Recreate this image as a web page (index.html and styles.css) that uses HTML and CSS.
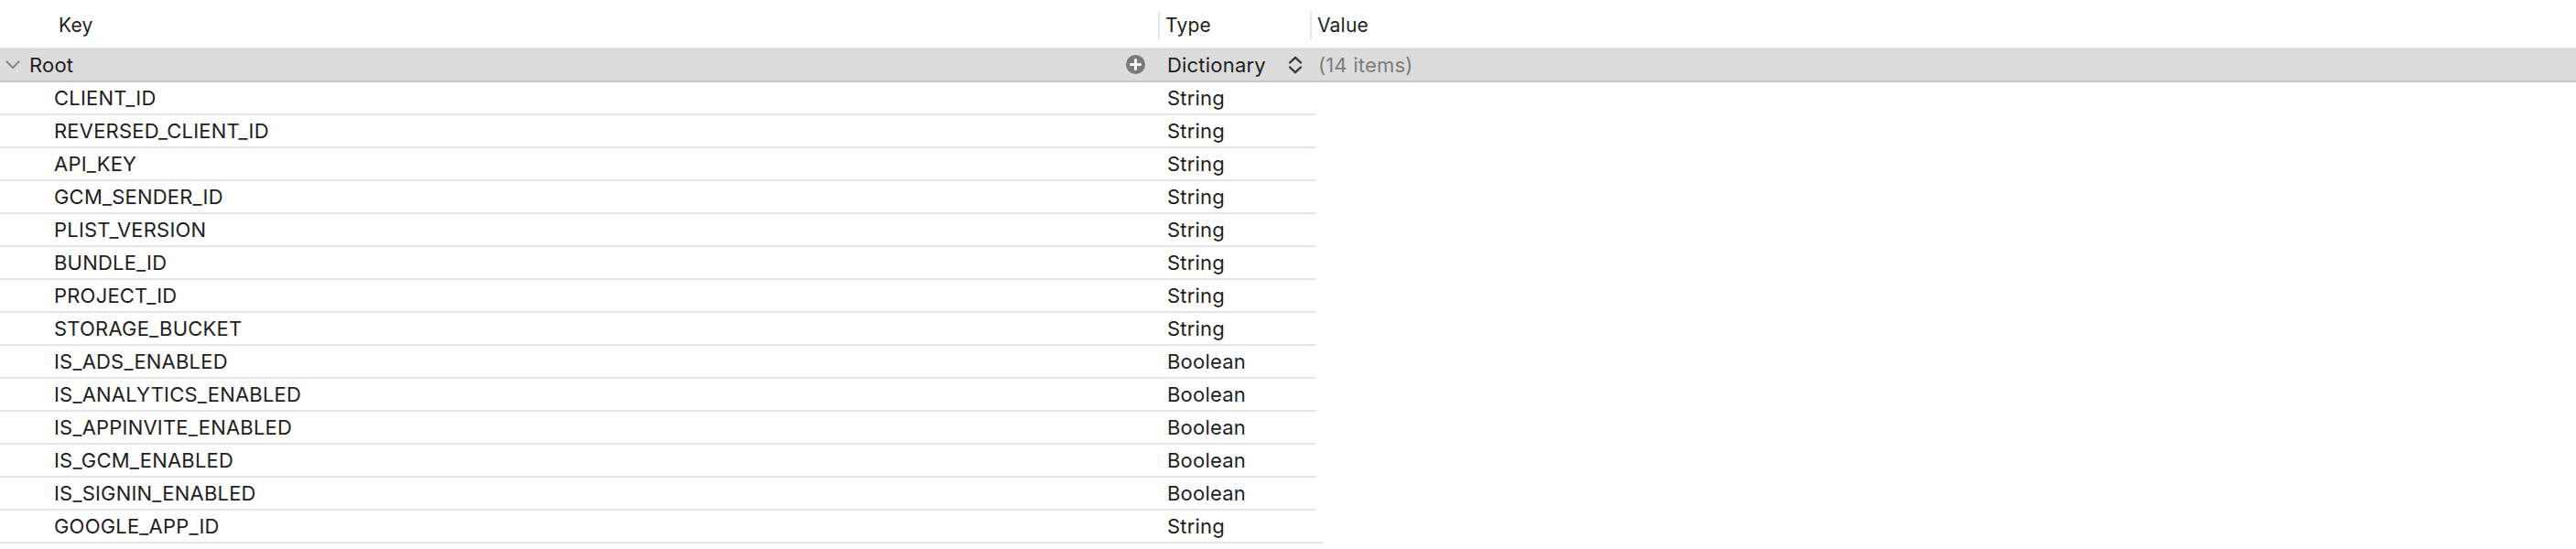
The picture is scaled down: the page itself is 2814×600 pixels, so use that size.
FILE: index.html
```html
<!DOCTYPE html>
<html>
<head>
<meta charset="utf-8">
<link rel="stylesheet" href="styles.css">
</head>
<body>
<div class="editor">
  <div class="header">
    <div class="hcell hkey">Key</div>
    <div class="hcell htype">Type</div>
    <div class="hcell hvalue">Value</div>
  </div>
  <div class="root">
    <div class="rkey">
      <svg class="disclosure" width="16" height="10" viewBox="0 0 16 10"><path d="M1.5 1.5 L8 8 L14.5 1.5" fill="none" stroke="#8a8a8a" stroke-width="2.2" stroke-linecap="round" stroke-linejoin="round"/></svg>
      <span class="rname">Root</span>
      <svg class="addbtn" width="21" height="21" viewBox="0 0 21 21"><circle cx="10.5" cy="10.5" r="10.5" fill="#7b7b7b"/><path d="M10.5 5.5 V15.5 M5.5 10.5 H15.5" stroke="#fff" stroke-width="3" stroke-linecap="round"/></svg>
    </div>
    <div class="rtype">
      <span>Dictionary</span>
      <svg class="stepper" width="16" height="20" viewBox="0 0 16 20"><path d="M2 7.5 L8 1.8 L14 7.5 M2 12.5 L8 18.2 L14 12.5" fill="none" stroke="#3a3a3a" stroke-width="2.4" stroke-linecap="round" stroke-linejoin="round"/></svg>
    </div>
    <div class="rvalue">(14 items)</div>
  </div>
  <div class="rows">
    <div class="row"><div class="key">CLIENT_ID</div><div class="type">String</div></div>
    <div class="row"><div class="key">REVERSED_CLIENT_ID</div><div class="type">String</div></div>
    <div class="row"><div class="key">API_KEY</div><div class="type">String</div></div>
    <div class="row"><div class="key">GCM_SENDER_ID</div><div class="type">String</div></div>
    <div class="row"><div class="key">PLIST_VERSION</div><div class="type">String</div></div>
    <div class="row"><div class="key">BUNDLE_ID</div><div class="type">String</div></div>
    <div class="row"><div class="key">PROJECT_ID</div><div class="type">String</div></div>
    <div class="row"><div class="key">STORAGE_BUCKET</div><div class="type">String</div></div>
    <div class="row"><div class="key">IS_ADS_ENABLED</div><div class="type">Boolean</div></div>
    <div class="row"><div class="key">IS_ANALYTICS_ENABLED</div><div class="type">Boolean</div></div>
    <div class="row"><div class="key">IS_APPINVITE_ENABLED</div><div class="type">Boolean</div></div>
    <div class="row"><div class="key">IS_GCM_ENABLED</div><div class="type">Boolean</div></div>
    <div class="row"><div class="key">IS_SIGNIN_ENABLED</div><div class="type">Boolean</div></div>
    <div class="row last"><div class="key">GOOGLE_APP_ID</div><div class="type">String</div></div>
  </div>
</div>
</body>
</html>
```
FILE: styles.css
```css
html, body {
  margin: 0;
  padding: 0;
  background: #ffffff;
}
body {
  font-family: Inter, "Liberation Sans", sans-serif;
  font-size: 22px;
  letter-spacing: 0.2px;
  color: #1e1e1e;
  width: 2814px;
  height: 600px;
  overflow: hidden;
}
.editor {
  display: flex;
  flex-direction: column;
}
.header {
  display: flex;
  height: 52px;
  box-sizing: border-box;
  padding-top: 3px;
  align-items: center;
}
.hcell {
  font-size: 21px;
  line-height: 32px;
}
.hkey {
  width: 1265px;
  box-sizing: border-box;
  padding-left: 64px;
}
.htype {
  width: 166px;
  box-sizing: border-box;
  border-left: 2px solid #e6e6e6;
  padding-left: 6px;
}
.hvalue {
  border-left: 2px solid #e6e6e6;
  padding-left: 6px;
}
.root {
  display: flex;
  height: 35px;
  background: #dcdcdc;
  border-top: 1px solid #e4e4e4;
  border-bottom: 2px solid #c6c6c6;
  box-sizing: content-box;
  align-items: center;
}
.rkey {
  width: 1265px;
  display: flex;
  align-items: center;
  box-sizing: border-box;
  padding-left: 6px;
  padding-right: 14px;
}
.disclosure {
  margin-right: 10px;
}
.rname {
  flex: 1;
}
.rtype {
  width: 166px;
  box-sizing: border-box;
  padding-left: 10px;
  padding-right: 8px;
  display: flex;
  align-items: center;
  justify-content: space-between;
}
.rvalue {
  padding-left: 9px;
  color: #7d7d7d;
}
.rows {
  display: flex;
  flex-direction: column;
  width: 1437px;
}
.row {
  display: flex;
  height: 34px;
  align-items: center;
  border-bottom: 2px solid #e6e6e6;
}
.row.last {
  width: 1445px;
}
.key {
  width: 1265px;
  box-sizing: border-box;
  padding-left: 59px;
}
.type {
  padding-left: 10px;
}
```
